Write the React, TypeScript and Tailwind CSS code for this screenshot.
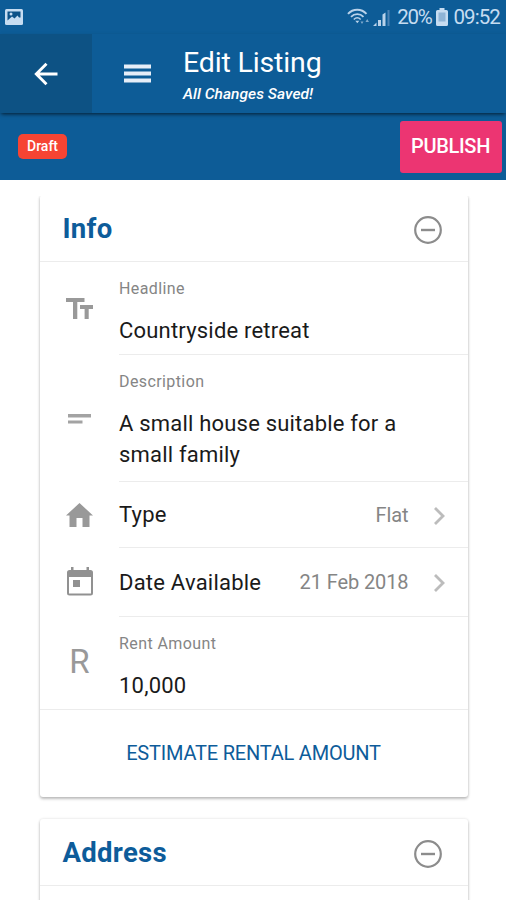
import { useState } from 'react';
import type { ReactNode } from 'react';

function PictureIcon() {
  return (
    <svg className="h-4 w-[18px]" viewBox="0 0 18 16">
      <rect x="0" y="0" width="18" height="16" rx="1.500" fill="#c6dcf1" />
      <path d="M2.500 2.500H15.500V8.500H14L12.500 6.500L9.500 9.500L7 7.500L2.500 11.500Z" fill="#0d5288" />
      <circle cx="6" cy="5" r="1.500" fill="#c6dcf1" />
    </svg>
  );
}

function WifiIcon() {
  return (
    <svg className="h-[18px] w-[23px]" viewBox="0 0 23 18" fill="none" stroke="#b9d2ea">
      <path d="M1 5.800C6 .3 14.500 .3 19.500 5.800" strokeWidth="2" />
      <path d="M4 8.800C7.500 5.200 13 5.200 16.500 8.800" strokeWidth="1.800" />
      <path d="M6.800 11.500C9 9.300 11.500 9.300 13.700 11.500" strokeWidth="1.600" />
      <path d="M8.300 12.800L10.300 15.300L12.300 12.800Z" fill="#b9d2ea" stroke="none" />
      <path d="M13.500 13.500L15 16L16.500 13.500ZM18.500 14L20.200 11L22 14Z" fill="#7fa9cd" stroke="none" />
    </svg>
  );
}

function SignalIcon() {
  return (
    <svg className="h-[17px] w-[17px]" viewBox="0 0 17 17" fill="#b9d2ea">
      <path d="M0 17L3.500 13.500V17ZM5 11H8V17H5ZM9.500 5.500L12.500 3.500V17H9.500Z" />
      <path d="M14.500 1H16.500V17H14.500Z" fill="#4a82b4" />
    </svg>
  );
}

function BatteryIcon() {
  return (
    <svg className="h-[18px] w-[12px]" viewBox="0 0 12 18">
      <path d="M3.500 0H8.500V2H10.500Q12 2 12 3.500V16.500Q12 18 10.500 18H1.500Q0 18 0 16.500V3.500Q0 2 1.500 2H3.500Z" fill="#c6dcf1" />
      <path d="M2.500 4.500H9.500V13.500H2.500Z" fill="#8fb4d6" />
    </svg>
  );
}

function BackIcon() {
  return (
    <svg className="h-6 w-6" viewBox="0 0 24 24" fill="none" stroke="#fff" strokeWidth="2.900">
      <path d="M23.500 12H2.500M12.500 1.700L2.300 12L12.500 22.300" />
    </svg>
  );
}

function MenuIcon() {
  return (
    <svg className="h-[19px] w-[27px]" viewBox="0 0 27 19" fill="#e6eef8">
      <path d="M0 .5H27V4.500H0ZM0 7.500H27V11.500H0ZM0 14.500H27V18.500H0Z" />
    </svg>
  );
}

function CollapseIcon() {
  return (
    <svg className="mt-px h-7 w-7" viewBox="0 0 28 28" fill="none" stroke="#8c8c8c">
      <circle cx="14" cy="14" r="12.800" strokeWidth="2.200" />
      <path d="M7 14H21" strokeWidth="2.400" />
    </svg>
  );
}

function TextIcon() {
  return (
    <svg className="h-[21px] w-[27px]" viewBox="0 0 27 21" fill="#999">
      <path d="M0 0H18.500V4H11.300V21H7V4H0ZM14 7H27V11H22.700V21H18.600V11H14Z" />
    </svg>
  );
}

function LinesIcon() {
  return (
    <svg className="h-[10px] w-[23px]" viewBox="0 0 23 10" fill="#a3a3a3">
      <path d="M0 0H23V3.500H0ZM0 6.500H14.500V9.500H0Z" />
    </svg>
  );
}

function HomeIcon() {
  return (
    <svg className="h-6 w-[27px]" viewBox="0 0 27 24" fill="#999">
      <path d="M13.500 0L27 12.500H23.500V24H16.500V15H10.500V24H3.500V12.500H0Z" />
    </svg>
  );
}

function CalendarIcon() {
  return (
    <svg className="mb-[2px] h-[29px] w-[26px]" viewBox="0 0 26 29" fill="#919191">
      <path
        fillRule="evenodd"
        d="M4 0H6.500V3H19.500V0H22V3H23.500Q26 3 26 5.500V26Q26 28.500 23.500 28.500H2.500Q0 28.500 0 26V5.500Q0 3 2.500 3H4ZM2 10V26.500H24V10Z"
      />
      <rect x="6" y="13" width="7" height="7" />
    </svg>
  );
}

function ChevronIcon() {
  return (
    <svg className="mt-[2px] h-[18px] w-[11px]" viewBox="0 0 11 18" fill="none" stroke="#bcbcbc" strokeWidth="2.800">
      <path d="M1 1L9 9L1 17" />
    </svg>
  );
}

interface CardProps {
  title: string;
  children?: ReactNode;
}

function Card({ title, children }: CardProps) {
  const [open, setOpen] = useState(true);

  return (
    <section className="shrink-0 rounded-[3px] bg-white shadow-[0_2px_3px_rgba(0,0,0,0.24),0_0_3px_rgba(0,0,0,0.12)]">
      <div className="flex h-[67px] items-center justify-between border-b border-[#ececec] pt-[2px] pr-[26px] pl-[22.5px]">
        <h2 className="text-[27.5px] font-bold tracking-[0.3px] text-[#0d5c9a]">{title}</h2>
        <button type="button" aria-label={title} onClick={() => setOpen(!open)}>
          <CollapseIcon />
        </button>
      </div>
      {open && children}
    </section>
  );
}

interface RowProps {
  icon: ReactNode;
  label: string;
  value: string;
}

interface FieldProps extends RowProps {
  last?: boolean;
  multiline?: boolean;
}

function Field({ icon, label, value, last, multiline }: FieldProps) {
  return (
    <div className={`flex ${last ? 'border-b border-[#ececec]' : ''}`}>
      <div className="flex w-[79px] shrink-0 items-center justify-center">{icon}</div>
      <div className={`grow pt-[16px] ${multiline ? 'pb-[11px]' : 'pb-[8px]'} ${last ? '' : 'border-b border-[#ececec]'}`}>
        <div className="text-[16px] leading-[22px] tracking-[0.4px] text-[#858585]">{label}</div>
        <div className="mt-[15px] max-w-[300px] text-[22px] leading-[31px] tracking-[0.2px] text-[#1a1a1a]">{value}</div>
      </div>
    </div>
  );
}

function SelectRow({ icon, label, value }: RowProps) {
  return (
    <div className="flex grow">
      <div className="flex w-[79px] shrink-0 items-center justify-center">{icon}</div>
      <div className="flex grow items-center border-b border-[#ececec] pr-[23.5px]">
        <span className="grow text-[22px] tracking-[0.23px] text-[#1a1a1a]">{label}</span>
        <span className="mr-[25px] text-[20px] tracking-[-0.1px] text-[#858585]">{value}</span>
        <ChevronIcon />
      </div>
    </div>
  );
}

export default function App() {
  return (
    <div className="flex h-[900px] w-[506px] flex-col overflow-hidden bg-white font-['Roboto',sans-serif]">
      {/* Status bar */}
      <div className="flex h-[34px] shrink-0 items-center bg-[#0d5c97] pr-[6px] pl-[5px] text-[20.500px] text-[#c6dcf1]">
        <PictureIcon />
        <div className="ml-auto flex items-center">
          <WifiIcon />
          <span className="ml-[3px]"><SignalIcon /></span>
          <span className="ml-[7px] pt-px tracking-[-1.3px]">20%</span>
          <span className="ml-[5px]"><BatteryIcon /></span>
          <span className="ml-[5px] pt-px tracking-[-0.9px]">09:52</span>
        </div>
      </div>

      {/* Title bar, its shadow only falls on the bar below */}
      <header className="relative z-10 flex h-[79px] shrink-0 bg-[#0d5c97] text-white shadow-[0_2px_4px_-1px_rgba(0,0,0,0.7)]">
        <button type="button" aria-label="Back" className="flex w-[92px] items-center justify-center bg-[#0d5284]">
          <BackIcon />
        </button>
        <button type="button" aria-label="Menu" className="flex w-[91px] items-center justify-center">
          <MenuIcon />
        </button>
        <div className="pt-[12px]">
          <h1 className="text-[28.500px] leading-[34px] tracking-[-0.15px]">Edit Listing</h1>
          <p className="mt-[5px] text-[15.500px] leading-[18px] font-medium tracking-[0.05px] italic">All Changes Saved!</p>
        </div>
      </header>

      <div className="flex h-[67px] shrink-0 items-center justify-between bg-[#0d5c97] pr-[4px] pl-[18px] text-white">
        <span className="flex h-[25px] w-[49px] items-center justify-center rounded-[5px] bg-[#f64433] text-[14px] font-medium">
          Draft
        </span>
        <button type="button" className="h-[52px] w-[102px] rounded-[3px] bg-[#ec3572] pr-px pb-px text-[20px] font-medium tracking-[-0.3px]">
          PUBLISH
        </button>
      </div>

      <main className="mt-[16px] flex min-h-0 grow flex-col gap-[22px] overflow-hidden pr-[38px] pl-[40px]">
        <div className="-mt-px shrink-0">
          <Card title="Info">
            <Field icon={<TextIcon />} label="Headline" value="Countryside retreat" />
            <Field
              icon={<LinesIcon />}
              label="Description"
              value="A small house suitable for a small family"
              multiline
            />
            <div className="flex h-[66px]">
              <SelectRow icon={<HomeIcon />} label="Type" value="Flat" />
            </div>
            <div className="flex h-[69px]">
              <SelectRow icon={<CalendarIcon />} label="Date Available" value="21 Feb 2018" />
            </div>
            <Field
              icon={<span className="pb-[4px] text-[33px] leading-none text-[#999]">R</span>}
              label="Rent Amount"
              value="10,000"
              last
            />
            <button type="button" className="flex h-[87px] w-full items-center justify-center pr-px pb-px text-[20px] tracking-[-0.2px] text-[#0d5c9a]">
              ESTIMATE RENTAL AMOUNT
            </button>
          </Card>
        </div>
        <Card title="Address">
          <div className="h-[60px]" />
        </Card>
      </main>
    </div>
  );
}
